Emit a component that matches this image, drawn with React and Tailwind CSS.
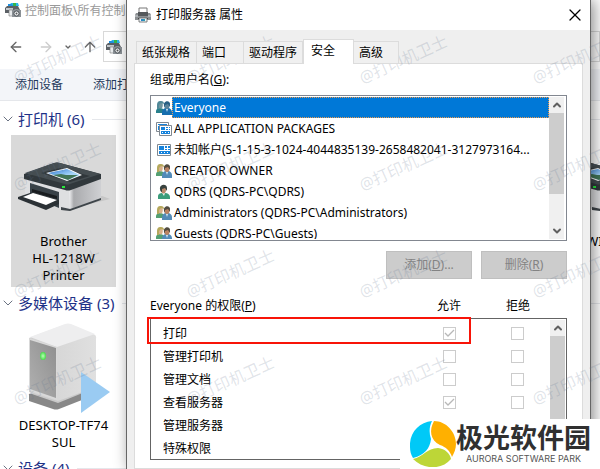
import React from 'react';
import { ArrowLeft, ArrowRight, ArrowUp, ChevronDown, ChevronUp, X } from 'lucide-react';

const principals = [
  { name: 'Everyone', icon: 'group', selected: true },
  { name: 'ALL APPLICATION PACKAGES', icon: 'packages' },
  { name: '未知帐户(S-1-15-3-1024-4044835139-2658482041-3127973164...', icon: 'app' },
  { name: 'CREATOR OWNER', icon: 'group' },
  { name: 'QDRS (QDRS-PC\\QDRS)', icon: 'user' },
  { name: 'Administrators (QDRS-PC\\Administrators)', icon: 'group' },
  { name: 'Guests (QDRS-PC\\Guests)', icon: 'group' }
];

const permissions = [
  { name: '打印', allow: true },
  { name: '管理打印机', allow: false },
  { name: '管理文档', allow: false },
  { name: '查看服务器', allow: true },
  { name: '管理服务器', allow: false },
  { name: '特殊权限', allow: false }
];

const tabs = [
  { name: '纸张规格', width: 'w-[61px]' },
  { name: '端口', width: 'w-[47px]' },
  { name: '驱动程序', width: 'w-[59px]' },
  { name: '安全', width: 'w-[51px]', active: true },
  { name: '高级', width: 'w-[45px]' }
];

// Icons
const DevicesIcon = () => (
  <svg className="w-4 h-4 shrink-0" viewBox="0 0 16 16">
    <path d="M3 2h10v3H3z" fill="#1d8fe0" />
    <path d="M5 1h8l1 3H9z" fill="#27b6ea" />
    <path d="M8 1h3v3H8z" fill="#35b44a" />
    <path d="M2 4h11l2 4H6v3H0V6z" fill="#5b6065" />
    <path d="M1 6h7v2H1z" fill="#c3c8cc" />
    <path d="M4 8h4v6H4z" fill="#e8ebed" stroke="#777" strokeWidth=".6" />
    <path d="M7 8h2l1-1h3l1 1h2v7H7z" fill="#8b9196" />
    <circle cx="11.500" cy="11.500" r="2.600" fill="#eef1f3" stroke="#4a4f54" />
    <circle cx="11.500" cy="11.500" r="1" fill="#555" />
  </svg>
);

const PrinterIcon = () => (
  <svg className="w-4 h-4 shrink-0" viewBox="0 0 16 16">
    <path d="M4 1h8v6H4z" fill="#fff" stroke="#777" />
    <path d="M1 6h14l1 2v5H0V8z" fill="#8b8f92" />
    <path d="M3 5h10v4H3z" fill="#55595c" />
    <path d="M0 8h3v2H0zM13 8h3v2h-3z" fill="#aeb2b5" />
    <path d="M3 11h10v1H3z" fill="#333" />
    <path d="M4 11h8v4H4z" fill="#eef5f8" stroke="#666" strokeWidth=".8" />
    <path d="M6 12h2v2H6z" fill="#2c83c8" />
    <path d="M8 12h2v2H8z" fill="#2b9bb0" />
  </svg>
);

const PrincipalIcon = ({ type, selected }) => {
  if (type === 'app') {
    return (
      <svg className="w-4 h-4 shrink-0" viewBox="0 0 16 16">
        <path d="M1.500 2.500h13v11h-13z" fill="#fff" stroke="#808890" />
        <path d="M3 4h5v4H3zM9 4h2v2H9zM12 4h2v2h-2zM9 7h2v1H9zM12 7h2v1h-2zM3 9h11v3H3z" fill="#1683dc" />
        <path d="M5 10h1v1H5zM8 10h1v1H8zM11 10h1v1h-1z" fill="#fff" />
      </svg>
    );
  }
  if (type === 'packages') {
    return (
      <svg className="w-4 h-4 shrink-0" viewBox="0 0 16 16">
        <path d="M.5 1.500h12v9H.5z" fill="#fff" stroke="#808890" />
        <path d="M2 3h9v1H2zM2 5h1v4H2z" fill="#1683dc" />
        <path d="M3.500 4.500h12v10h-12z" fill="#fff" stroke="#808890" />
        <path d="M5 6h4v3H5zM10 6h2v1h-2zM13 6h1v1h-1zM10 8h2v1h-2zM13 8h1v1h-1zM5 10h9v3H5z" fill="#1683dc" />
        <path d="M6 11h1v1H6zM9 11h1v1H9zM12 11h1v1h-1z" fill="#fff" />
      </svg>
    );
  }
  if (type === 'user') {
    return (
      <svg className="w-4 h-4 shrink-0" viewBox="0 0 16 16">
        <path d="M2 15V12c0-2 2-3 4-3h3c3 0 5 2 5 4v2z" fill="#3c9d7b" />
        <path d="m6 9 2 3 1-3z" fill="#e9f2ed" />
        <ellipse cx="7.500" cy="5.500" rx="2.500" ry="4" fill="#b98a6b" />
        <path d="M4 5c-1-5 7-6 7-1v3L9 4 6 5v3C5 8 4 7 4 5z" fill="#38423e" />
      </svg>
    );
  }
  return (
    <svg className="w-4 h-4 shrink-0" viewBox="0 0 16 16">
      <path d="M0 13v-2c0-2 2-3 4-3s4 1 4 3v2z" fill={selected ? '#28808c' : '#559f72'} />
      <ellipse cx="4.500" cy="5" rx="2.300" ry="3.500" fill={selected ? '#71959f' : '#d9b18c'} />
      <path d="M1 6c0-4 1-5 4-5 2 0 3 1 3 3L5 3 3 5v4H1z" fill={selected ? '#508898' : '#b5a85c'} />
      <path d="M6 15v-3c0-2 2-4 4-4h2c2 0 4 2 4 4v3z" fill={selected ? '#176eae' : '#538bb8'} />
      <path d="m10 9 1 3 1-3z" fill="#d7e9f2" />
      <ellipse cx="11" cy="5.500" rx="2.500" ry="3.500" fill={selected ? '#5c849a' : '#b98262'} />
      <path d="M8 6c-1-6 7-6 6-1v2l-2-3-3 1v3z" fill={selected ? '#285f83' : '#514b40'} />
    </svg>
  );
};

const PrinterDrawing = () => (
  <svg className="w-24 h-14 shrink-0" viewBox="0 0 96 56">
    <defs>
      <linearGradient id="side" x1="0" x2="1">
        <stop offset="0" stopColor="#f2f2f4" />
        <stop offset=".15" stopColor="#a9aaad" />
        <stop offset="1" stopColor="#cfd0d3" />
      </linearGradient>
      <linearGradient id="sky" x1="0" y1="0" x2="1" y2="1">
        <stop offset="0" stopColor="#2b78d6" />
        <stop offset=".6" stopColor="#a7d5f8" />
      </linearGradient>
    </defs>
    <path d="M54 49 94 39l-8-3z" fill="#c6c6c6" />
    <path d="M9 16h76v22l-31 12-7 0L9 36z" fill="#dedfe1" />
    <path d="M53 26 85 17v22L54 49z" fill="url(#side)" />
    <path d="M45 47l9 2 31-11v2L54 51l-9-1z" fill="#3e454a" />
    <path d="M14 23 43 32v16L14 36z" fill="#394248" />
    <path d="M16 29 41 36v3L16 32z" fill="#191d20" />
    <path d="M2 37 17 32l26 8v4L30 50 2 39z" fill="#2b3135" />
    <path d="M7 37 17 33l24 7-11 5z" fill="#fff" />
    <path d="M8 14 38 3q3-1 6 0l41 11v5L55 30q-3 1-6 0L8 19z" fill="#31383c" />
    <path d="M9 13 38 3q3-1 6 0l40 11-30 10q-3 1-5 0z" fill="#454d51" />
    <path d="M25 13 44 8l30 8-20 6z" fill="#30373b" />
    <path d="M30 13 51 8l15 7-15 6z" fill="#fff" />
    <path d="M32 13 51 9l13 6-12 5z" fill="url(#sky)" />
    <path d="m37 15 8-1 5 1 12 0-10 5z" fill="#427557" />
    <rect x="46" y="26" width="3" height="2" fill="#26e83a" />
  </svg>
);

const ServerDrawing = () => (
  <svg className="w-24 h-24 shrink-0 -mt-0.5" viewBox="0 0 96 96">
    <defs>
      <linearGradient id="front" x1="0" y1="1" x2="1" y2="0">
        <stop offset="0" stopColor="#b1b1b1" />
        <stop offset="1" stopColor="#8e8e8e" />
      </linearGradient>
      <linearGradient id="case" x1="0" x2="1">
        <stop offset="0" stopColor="#d0d0d0" />
        <stop offset="1" stopColor="#e0e0e0" />
      </linearGradient>
      <radialGradient id="led">
        <stop offset="0" stopColor="#baffb7" />
        <stop offset="1" stopColor="#48dd4b" />
      </radialGradient>
    </defs>
    <path d="M13 77v7l24 8q3 1 6 0l28-11V71z" fill="#888" />
    <path d="M13 76 42 86l32-13v-4L42 79z" fill="#c9c9c9" />
    <path d="M13 21 48 8q4-1 8 0l21 9q4 1 3 5v48L42 84 13 75z" fill="url(#case)" />
    <path d="M14 20 49 7q3-1 6 0l24 10-38 13z" fill="#eeeeef" />
    <path d="M13 21 41 30v53L13 74z" fill="#d9d9d9" />
    <path d="M14 23 40 31v50L14 72z" fill="url(#front)" />
    <ellipse cx="27" cy="39" rx="3" ry="4" fill="url(#led)" />
    <path d="m65 55 29 20-29 21z" fill="#9acbf2" />
  </svg>
);

// Section heading with its rule
const GroupHeading = ({ children }) => (
  <h2 className="flex items-center h-8 text-[15px] text-[#1e3287] whitespace-nowrap">
    <ChevronDown className="w-4 h-4 text-gray-500 shrink-0" strokeWidth={1.5} />
    <span className="ml-0.5">{children}</span>
    <span className="ml-2 flex-1 h-px bg-gray-200" />
  </h2>
);

const Explorer = () => (
  <div className="h-full bg-white">
    <header className="h-[31px] flex items-start gap-1 pt-0.5 pl-[5px] text-xs text-[#999]">
      <DevicesIcon />
      <span className="mt-px">控制面板\所有控制</span>
    </header>
    <nav className="flex h-[38px]">
      <div className="w-[103px] shrink-0 flex items-center justify-between pl-2 pr-[5px] pb-1.5 text-[#666]">
        <button aria-label="Back"><ArrowLeft className="w-4 h-4" /></button>
        <button aria-label="Forward" className="ml-1 text-[#ccc]"><ArrowRight className="w-4 h-4" /></button>
        <button aria-label="Recent"><ChevronDown className="w-2 h-2" strokeWidth={4} /></button>
        <button aria-label="Up"><ArrowUp className="w-4 h-4" /></button>
      </div>
      <div className="flex-1 h-[31px] flex items-center pl-0.5 border border-[#d9d9d9]">
        <DevicesIcon />
      </div>
    </nav>
    <div className="flex items-center h-8 gap-[30px] pl-[15px] bg-[#f3f5f9] border-b border-gray-200 text-xs text-[#1e395b]">
      <button>添加设备</button>
      <button>添加打</button>
    </div>
    <main className="pt-0.5">
      <GroupHeading>打印机 (6)</GroupHeading>
      <div className="flex justify-between ml-[11px] -mr-[47px]">
        <div className="w-[105px] h-[152px] pt-[25px] bg-[#d9d9d9] flex flex-col items-center text-[13px] leading-[17px] text-center">
          <PrinterDrawing />
          <p className="mt-[17px]">Brother<br />HL-1218W<br />Printer</p>
        </div>
        <div className="w-[105px] h-[152px] pt-[25px] flex flex-col items-center text-[13px] leading-[17px]">
          <PrinterDrawing />
          <p className="mt-[17px]">WI</p>
        </div>
      </div>
      <GroupHeading>多媒体设备 (3)</GroupHeading>
      <div className="ml-[11px] w-[105px] h-[133px] flex flex-col items-center text-[13px] leading-[17px] text-center">
        <ServerDrawing />
        <p className="mt-1">DESKTOP-TF74<br />SUL</p>
      </div>
      <GroupHeading>设备 (4)</GroupHeading>
    </main>
  </div>
);

const ScrollBar = ({ thumbClass, showDown }) => (
  <div className="w-[15px] shrink-0 flex flex-col bg-[#f0f0f0] text-[#606060]">
    <div className="h-4 flex items-center justify-center">
      <ChevronUp className="w-3 h-3" strokeWidth={4} />
    </div>
    <div className={`bg-[#cdcdcd] ${thumbClass}`} />
    {showDown && (
      <div className="h-4 mt-auto flex items-center justify-center">
        <ChevronDown className="w-3 h-3" strokeWidth={4} />
      </div>
    )}
  </div>
);

const PermissionBox = ({ label, checked }) => (
  <span className="relative flex w-[13px] h-[13px] mx-auto">
    <input
      type="checkbox"
      aria-label={label}
      defaultChecked={checked}
      disabled
      className="peer appearance-none w-[13px] h-[13px] border border-[#ccc] bg-white"
    />
    <svg className="absolute inset-0 hidden peer-checked:block" viewBox="0 0 13 13">
      <path d="m2 6 3 3 6-6" fill="none" stroke="#b8b8b8" strokeWidth="1.300" />
    </svg>
  </span>
);

const SecurityPanel = () => (
  <div className="mx-[7px] flex-1 px-[15px] pt-[7px] bg-white border border-[#dcdcdc]">
    <h2 id="principals" className="h-6 leading-[18px]">组或用户名(<u>G</u>):</h2>
    <div className="h-[146px] flex p-px pr-0.5 border border-[#828790] bg-white">
      <ul aria-labelledby="principals" className="flex-1 min-w-0 overflow-hidden">
        {principals.map((item) => (
          <li key={item.name} className="flex items-center h-[21px] pl-1">
            <PrincipalIcon type={item.icon} selected={item.selected} />
            <span
              className={`flex-1 min-w-0 h-[21px] pl-px leading-[19px] border whitespace-nowrap overflow-hidden ${
                item.selected
                  ? 'bg-[#0078d7] text-white border-dotted border-[#e99a50]'
                  : 'border-transparent'
              }`}
            >
              {item.name}
            </span>
          </li>
        ))}
      </ul>
      <ScrollBar thumbClass="h-[81px]" showDown />
    </div>
    <div className="flex justify-end gap-[9px] mt-[10px]">
      <button disabled className="w-[86px] h-7 bg-[#ccc] border border-[#bfbfbf] text-[#838383]">添加(<u>D</u>)...</button>
      <button disabled className="w-[86px] h-7 bg-[#ccc] border border-[#bfbfbf] text-[#838383]">删除(<u>R</u>)</button>
    </div>
    <div className="relative mt-[14px]">
      <div className="flex items-center h-[25px] pr-4">
        <h2 className="flex-1">Everyone 的权限(<u>P</u>)</h2>
        <span className="w-[72px] text-center">允许</span>
        <span className="w-[66px] text-center">拒绝</span>
      </div>
      <div className="flex h-[142px] p-px border border-[#646464]">
        <table className="flex-1 h-fit mt-0.5 block">
          <tbody className="block">
            {permissions.map((item) => (
              <tr key={item.name} className="flex items-center h-[23px]">
                <td className="flex-1 pl-[11px]">{item.name}</td>
                <td className="w-[70px]"><PermissionBox label={`允许 ${item.name}`} checked={item.allow} /></td>
                <td className="w-[66px]"><PermissionBox label={`拒绝 ${item.name}`} checked={false} /></td>
              </tr>
            ))}
          </tbody>
        </table>
        <ScrollBar thumbClass="flex-1" />
      </div>
      {/* Highlight on the print permission */}
      <div className="absolute top-6 -left-[3px] right-[96px] h-[27px] border-2 border-[#f81408]" />
    </div>
  </div>
);

const PropertiesDialog = () => (
  <section className="absolute inset-y-0 left-[126px] right-[9px] flex flex-col bg-[#efefef] border-x border-[#666] shadow-[3px_0_14px_rgba(0,0,0,0.45)] text-xs">
    <header className="h-[30px] shrink-0 flex items-center gap-1 pl-2 pr-[5px] bg-white">
      <PrinterIcon />
      <h1 className="ml-px">打印服务器 属性</h1>
      <button aria-label="Close" className="ml-auto"><X className="w-5 h-5" strokeWidth={1.5} /></button>
    </header>
    <div role="tablist" className="flex items-end h-[34px] shrink-0 pl-[9px] -mb-px z-10">
      {tabs.map((tab) => (
        <button
          key={tab.name}
          role="tab"
          aria-selected={!!tab.active}
          className={`text-left border border-[#dcdcdc] ${tab.width} ${
            tab.active
              ? 'h-[25px] pl-[7px] pb-0.5 bg-white border-b-0'
              : 'h-[23px] pl-[5px] border-l-0 first:border-l bg-[#f0f0f0]'
          }`}
        >
          {tab.name}
        </button>
      ))}
    </div>
    <SecurityPanel />
  </section>
);

const Watermarks = () => (
  <div aria-hidden="true" className="absolute left-[10px] top-[47px] grid grid-cols-[repeat(4,173px)] auto-rows-[107px] pointer-events-none">
    {Array.from({ length: 16 }, (_, i) => (
      <span key={i} className="w-24 h-6 -rotate-[24deg] text-base leading-6 text-slate-500/20 whitespace-nowrap">
        @打印机卫士
      </span>
    ))}
  </div>
);

const SiteBadge = () => (
  <aside className="absolute right-0 bottom-0 w-[200px] h-[50px] pl-[10px] flex items-center bg-white">
    <svg className="w-[46px] h-[46px] shrink-0" viewBox="0 0 46 46">
      <path d="M22 0C9 1-1 12 0 26c0 4 1 8 3 11 12-3 17-10 18-19-2-6-2-12 1-18z" fill="#00c9f7" />
      <path d="M24 0c12 0 22 11 22 23 0 5-2 9-4 13-2-6-6-10-12-12-10-5-11-15-6-24z" fill="#ffb000" />
      <path d="M3 38c10-2 14-11 25-11 7 1 12 5 13 11-9 11-27 11-38 0z" fill="#bdd637" />
    </svg>
    <div className="flex flex-col items-center whitespace-nowrap text-[#303030]">
      <strong className="text-[27px] leading-[30px]">极光软件园</strong>
      <span className="text-[9px] leading-3 text-[#555] font-['Inter',sans-serif]">AURORA SOFTWARE PARK</span>
    </div>
  </aside>
);

const App = () => (
  <div className="relative h-screen overflow-hidden text-black font-['Noto_Sans','Noto_Sans_CJK_SC',sans-serif]">
    <Explorer />
    <PropertiesDialog />
    <Watermarks />
    <SiteBadge />
  </div>
);

export default App;
